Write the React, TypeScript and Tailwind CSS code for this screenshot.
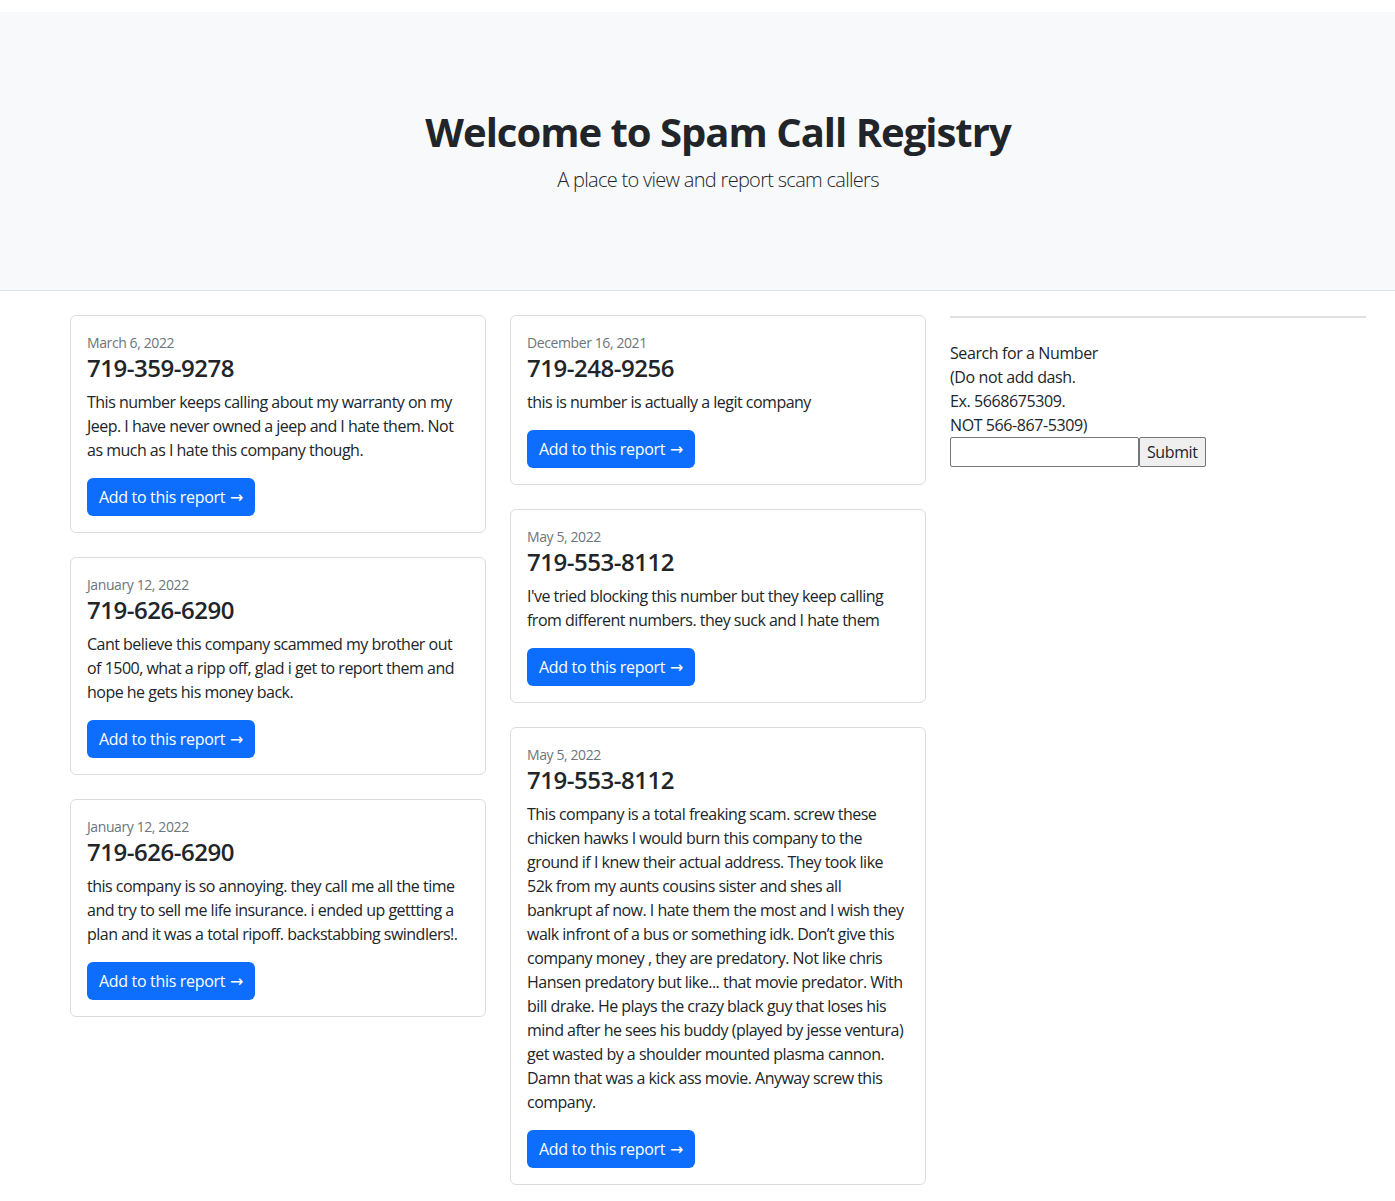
const reports = {
  left: [
    {
      date: "March 6, 2022",
      number: "719-359-9278",
      text: "This number keeps calling about my warranty on my Jeep. I have never owned a jeep and I hate them. Not as much as I hate this company though.",
    },
    {
      date: "January 12, 2022",
      number: "719-626-6290",
      text: "Cant believe this company scammed my brother out of 1500, what a ripp off, glad i get to report them and hope he gets his money back.",
    },
    {
      date: "January 12, 2022",
      number: "719-626-6290",
      text: "this company is so annoying. they call me all the time and try to sell me life insurance. i ended up gettting a plan and it was a total ripoff. backstabbing swindlers!.",
    },
  ],
  middle: [
    {
      date: "December 16, 2021",
      number: "719-248-9256",
      text: "this is number is actually a legit company",
    },
    {
      date: "May 5, 2022",
      number: "719-553-8112",
      text: "I've tried blocking this number but they keep calling from different numbers. they suck and I hate them",
    },
    {
      date: "May 5, 2022",
      number: "719-553-8112",
      text: "This company is a total freaking scam. screw these chicken hawks I would burn this company to the ground if I knew their actual address. They took like 52k from my aunts cousins sister and shes all bankrupt af now. I hate them the most and I wish they walk infront of a bus or something idk. Don\u2019t give this company money , they are predatory. Not like chris Hansen predatory but like... that movie predator. With bill drake. He plays the crazy black guy that loses his mind after he sees his buddy (played by jesse ventura) get wasted by a shoulder mounted plasma cannon. Damn that was a kick ass movie. Anyway screw this company.",
    },
  ],
};

type Report = { date: string; number: string; text: string };

function ReportCard({ report }: { report: Report }) {
  return (
    <div className="border border-[#dcdcdc] rounded-[6px] p-4 bg-white">
      <div className="text-[14px] leading-[21px] text-[#6c757d]">{report.date}</div>
      <h4 className="text-[24px] leading-[29px] font-semibold tracking-[-0.02em] text-[#212529] mb-2">{report.number}</h4>
      <p className="text-[16px] leading-6 tracking-[-0.032em] text-[#212529] mb-4">{report.text}</p>
      <button className="bg-[#0d6efd] text-white text-[16px] leading-6 px-3 py-[7px] rounded-[6px] tracking-[-0.02em]">
        Add to this report{" "}
        <span style={{ fontFamily: '"DejaVu Sans", sans-serif' }} className="text-[16px] leading-none ml-px">&rarr;</span>
      </button>
    </div>
  );
}

export default function App() {
  return (
    <div className="min-h-screen bg-white text-[#212529] pt-3 pb-4 tracking-[-0.025em]" style={{ fontFamily: '"Open Sans", "Noto Sans", sans-serif' }}>
      <header className="bg-[#f8f9fa] border-b border-[#dee2e6] h-[279px] flex flex-col items-center pt-[96px] pl-[41px]">
        <h1 className="text-[40px] leading-[48px] font-bold tracking-[-0.025em]">Welcome to Spam Call Registry</h1>
        <p className="text-[20px] leading-[30px] font-light text-[#212529] mt-[9px] tracking-[-0.035em]">A place to view and report scam callers</p>
      </header>

      <main className="flex gap-6 pl-[70px] pt-6">
        <div className="w-[416px] flex flex-col gap-6">
          {reports.left.map((r, i) => (
            <ReportCard key={i} report={r} />
          ))}
        </div>
        <div className="w-[416px] flex flex-col gap-6">
          {reports.middle.map((r, i) => (
            <ReportCard key={i} report={r} />
          ))}
        </div>
        <div className="w-[416px]">
          <div className="h-[2px] bg-[#e0e0e0] mt-px" />
          <form className="mt-[23px] text-[16px] leading-6" onSubmit={(e) => e.preventDefault()}>
            <div>Search for a Number</div>
            <div>(Do not add dash.</div>
            <div>Ex. 5668675309.</div>
            <div>NOT 566-867-5309)</div>
            <div className="flex items-stretch">
              <input type="text" className="w-[189px] h-[30px] border border-[#767676] rounded-[2px] bg-white" />
              <button className="h-[30px] px-[7px] border border-[#767676] rounded-[2px] bg-[#efefef] text-[16px]">
                Submit
              </button>
            </div>
          </form>
        </div>
      </main>
    </div>
  );
}
